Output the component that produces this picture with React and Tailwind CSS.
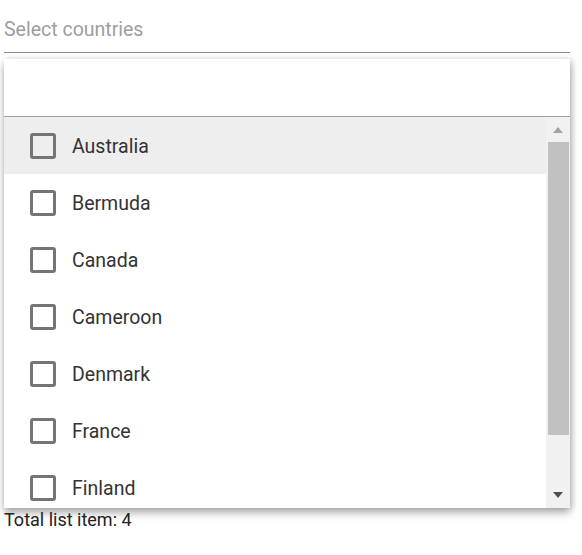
import React from 'react';

const countries = ['Australia', 'Bermuda', 'Canada', 'Cameroon', 'Denmark', 'France', 'Finland', 'Germany', 'Greenland'];

const CountryRow = ({ name, active }) => (
  <div className={`flex items-center h-[57px] shrink-0 pl-[26px] ${active ? 'bg-[#eeeeee]' : 'bg-white'}`}>
    <span className="w-[26px] h-[26px] border-[3px] border-[#757575] rounded-[3px] box-border" />
    <span className="ml-4 pt-[3px] text-[19.5px] text-[#333333]">{name}</span>
  </div>
);

const App = () => {
  return (
    <div className="w-[582px] h-[555px] bg-white px-1 font-['Roboto',sans-serif]">
      {/* input */}
      <div className="w-[566px] h-[53px] border-b border-[#8a8a8a] flex items-end pb-[10px]">
        <span className="text-[19.5px] leading-6 text-[#9e9e9e]">Select countries</span>
      </div>

      {/* popup */}
      <div className="mt-[6px] w-[566px] h-[449px] bg-white shadow-[0_5px_8px_rgba(0,0,0,0.3),2px_0_6px_rgba(0,0,0,0.15)] flex flex-col">
        <div className="h-[58px] shrink-0 border-b border-[#9e9e9e]" />
        <div className="flex flex-1 overflow-hidden">
          <div className="flex-1 flex flex-col overflow-hidden">
            {countries.map((c, idx) => (
              <CountryRow key={c} name={c} active={idx === 0} />
            ))}
          </div>
          {/* scrollbar */}
          <div className="w-[24px] bg-[#f1f1f1] flex flex-col items-center">
            <div className="h-[25px] flex items-center justify-center">
              <svg width="10" height="6" viewBox="0 0 10 6"><path d="M0 6 L5 0 L10 6 Z" fill="#a3a3a3" /></svg>
            </div>
            <div className="w-[21px] h-[293px] bg-[#c1c1c1]" />
            <div className="flex-1 flex items-end pb-[10px]">
              <svg width="10" height="6" viewBox="0 0 10 6"><path d="M0 0 L10 0 L5 6 Z" fill="#505050" /></svg>
            </div>
          </div>
        </div>
      </div>

      <div className="text-[18px] text-[#222222] leading-6">Total list item: 4</div>
    </div>
  );
};

export default App;
